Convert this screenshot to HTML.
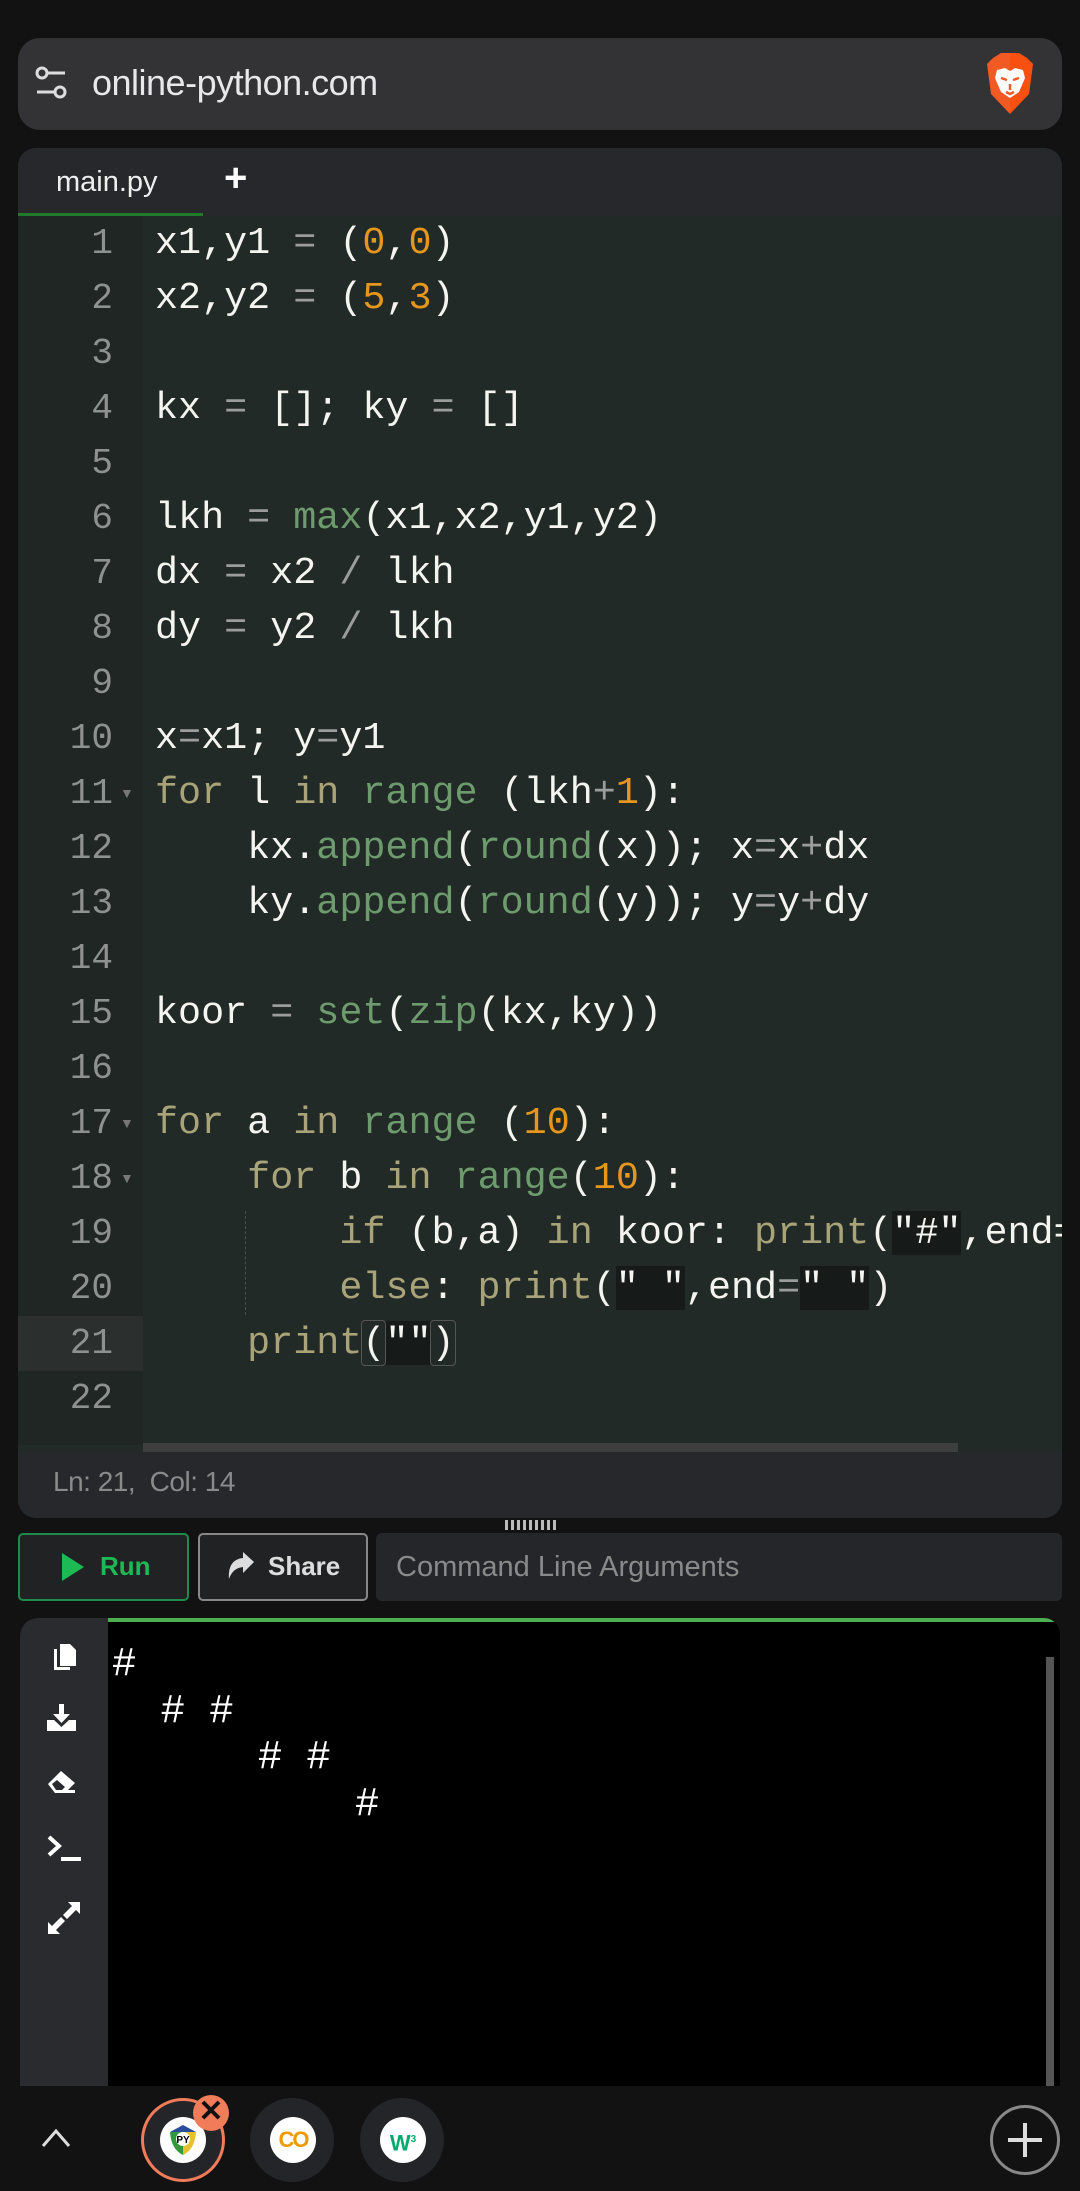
<!DOCTYPE html>
<html><head><meta charset="utf-8"><style>
*{margin:0;padding:0;box-sizing:border-box}
body{width:1080px;height:2191px;background:#121212;position:relative;overflow:hidden;font-family:"Liberation Sans",sans-serif}
.abs{position:absolute}
.url{left:18px;top:38px;width:1044px;height:92px;background:#333336;border-radius:22px}
.url .t{left:74px;top:24px;font-size:36px;color:#e8e8e8;letter-spacing:-0.5px}
.ed{left:18px;top:148px;width:1044px;height:1370px;background:#222a27;border-radius:18px;overflow:hidden}
.tabbar{left:0;top:0;width:1044px;height:68px;background:#27282b}
.code{font-family:"Liberation Mono","DejaVu Sans Mono",monospace;font-size:38.4px;line-height:55px;white-space:pre;color:#f4f4f0}
.gut{left:0;top:68px;width:125px;height:1229px;background:#1f2623}
.ln{left:0;width:95px;text-align:right;color:#8d918f;font-family:"Liberation Mono",monospace;font-size:36px;line-height:55px;white-space:pre}
.k{color:#a8a378}.b{color:#6e9b6e}.n{color:#e5961e}.o{color:#9a9d9b}
.s{background:#161b19}
.fold{position:absolute;left:102px;color:#777;font-size:14px;line-height:55px}
</style></head><body>
<div class="abs url">
 <svg class="abs" style="left:14px;top:26px" width="40" height="40" viewBox="0 0 40 40" fill="none" stroke="#ddd" stroke-width="3"><circle cx="10" cy="9" r="5"/><line x1="15" y1="9" x2="33" y2="9"/><circle cx="28" cy="28" r="5"/><line x1="5" y1="28" x2="23" y2="28"/></svg>
 <div class="abs t">online-python.com</div>
 <svg class="abs" style="left:967px;top:14px" width="50" height="64" viewBox="0 0 50 64"><path d="M8 6 L16 1 H34 L42 6 L48 12 L44 42 L25 62 L6 42 L2 12Z" fill="#f15a22"/><path d="M25 1 H34 L42 6 L48 12 L44 42 L25 62Z" fill="#ff4500" opacity=".5"/><path d="M12 18 L20 16 L25 19 L30 16 L38 18 L40 26 L34 40 L25 46 L16 40 L10 26Z" fill="#fff"/><path d="M16 26 L22 28 M34 26 L28 28 M25 32 V38 M21 40 L25 42 L29 40" stroke="#f15a22" stroke-width="2.5" fill="none"/></svg>
</div>
<div class="abs ed">
 <div class="abs tabbar"></div>
 <div class="abs" style="left:38px;top:18px;font-size:29px;color:#eee">main.py</div>
 <div class="abs" style="left:0;top:65px;width:185px;height:3px;background:#1f7a2a"></div>
 <div class="abs" style="left:206px;top:8px;font-size:40px;color:#fff;font-weight:bold">+</div>
 <div class="abs gut"></div>
 <div class="abs" style="left:0;top:1168px;width:125px;height:55px;background:#2b302e"></div>
 <div class="abs ln" style="top:68px">1
2
3
4
5
6
7
8
9
10
11
12
13
14
15
16
17
18
19
20
21
22</div>
 <div class="fold" style="top:618px">▼</div>
 <div class="fold" style="top:948px">▼</div>
 <div class="fold" style="top:1003px">▼</div>
 <div class="abs" style="left:227px;top:1063px;width:0;height:104px;border-left:1px dashed #4a4f4c"></div>
 <div class="abs code" style="left:137px;top:68px">x1,y1 <span class="o">=</span> (<span class="n">0</span>,<span class="n">0</span>)
x2,y2 <span class="o">=</span> (<span class="n">5</span>,<span class="n">3</span>)

kx <span class="o">=</span> []; ky <span class="o">=</span> []

lkh <span class="o">=</span> <span class="b">max</span>(x1,x2,y1,y2)
dx <span class="o">=</span> x2 <span class="o">/</span> lkh
dy <span class="o">=</span> y2 <span class="o">/</span> lkh

x<span class="o">=</span>x1; y<span class="o">=</span>y1
<span class="k">for</span> l <span class="k">in</span> <span class="b">range</span> (lkh<span class="o">+</span><span class="n">1</span>):
    kx.<span class="b">append</span>(<span class="b">round</span>(x)); x<span class="o">=</span>x<span class="o">+</span>dx
    ky.<span class="b">append</span>(<span class="b">round</span>(y)); y<span class="o">=</span>y<span class="o">+</span>dy

koor <span class="o">=</span> <span class="b">set</span>(<span class="b">zip</span>(kx,ky))

<span class="k">for</span> a <span class="k">in</span> <span class="b">range</span> (<span class="n">10</span>):
    <span class="k">for</span> b <span class="k">in</span> <span class="b">range</span>(<span class="n">10</span>):
        <span class="k">if</span> (b,a) <span class="k">in</span> koor: <span class="k">print</span>(<span class="s">"#"</span>,end=" ")
        <span class="k">else</span>: <span class="k">print</span>(<span class="s">" "</span>,end<span class="o">=</span><span class="s">" "</span>)
    <span class="k">print</span><span style="outline:1px solid #555;border-radius:3px">(</span><span class="s">""</span><span style="outline:1px solid #555;border-radius:3px">)</span>
</div>
 <div class="abs" style="left:125px;top:1295px;width:815px;height:9px;background:#3d3f3f"></div>
 <div class="abs" style="left:0;top:1305px;width:1044px;height:65px;background:#27282b"></div>
 <div class="abs" style="left:35px;top:1318px;font-size:28px;color:#8a8a8a;letter-spacing:-0.5px">Ln: 21,&nbsp; Col: 14</div>
</div>
<div class="abs" style="left:505px;top:1520px;width:52px;height:10px;background:repeating-linear-gradient(90deg,#bbb 0 3px,transparent 3px 6px)"></div>
<div class="abs" style="left:18px;top:1533px;width:171px;height:68px;border:2px solid #1f8a4c;border-radius:5px;background:#212224"></div>
<svg class="abs" style="left:60px;top:1551px" width="26" height="32"><path d="M2 2 L24 16 L2 30Z" fill="#1db954"/></svg>
<div class="abs" style="left:100px;top:1551px;font-size:26px;color:#1db954;font-weight:bold">Run</div>
<div class="abs" style="left:198px;top:1533px;width:170px;height:68px;border:2px solid #888;border-radius:5px;background:#212224"></div>
<svg class="abs" style="left:226px;top:1551px" width="30" height="30" viewBox="0 0 30 30"><path d="M28 11 L17 1 V7 C7 8 2 15 3 28 C6 20 10 17 17 16 V22Z" fill="#ddd"/></svg>
<div class="abs" style="left:268px;top:1551px;font-size:26px;color:#ddd;font-weight:bold">Share</div>
<div class="abs" style="left:376px;top:1533px;width:686px;height:68px;background:#252629;border-radius:6px"></div>
<div class="abs" style="left:396px;top:1551px;font-size:29px;color:#8a8a8a">Command Line Arguments</div>
<div class="abs" style="left:20px;top:1618px;width:1040px;height:468px;background:#000;border-radius:18px 16px 0 0;overflow:hidden">
 <div class="abs" style="left:0;top:0;width:88px;height:468px;background:#2a2b2e"></div>
 <div class="abs" style="left:88px;top:0;width:960px;height:4px;background:#4caf50"></div>
 <div class="abs" style="left:1026px;top:39px;width:8px;height:430px;background:#555"></div>
 <div class="abs" style="left:92px;top:24px;font-family:'Liberation Mono',monospace;font-size:40.5px;line-height:46.5px;color:#fff;white-space:pre">#
  # #
      # #
          #</div>
 <svg class="abs" style="left:30px;top:22px" width="30" height="32" viewBox="0 0 30 32" fill="#fff"><path d="M10 4 H20 L26 10 V26 H10Z"/><path d="M4 9 V30 H20 V27 H7 V9Z"/></svg>
 <svg class="abs" style="left:26px;top:85px" width="32" height="32" viewBox="0 0 32 32" fill="#fff"><rect x="13" y="1" width="5" height="12"/><path d="M7 11 H24 L15.5 20Z"/><path d="M1 17 H8 L15.5 24 L23 17 H30 V28 H1Z"/></svg>
 <svg class="abs" style="left:26px;top:148px" width="32" height="32" viewBox="0 0 32 32"><path d="M2 18 L15 5 L29 17 L19 27 H9Z" fill="#fff"/><path d="M6 18 L11 14 L19 21 L16 24 H10Z" fill="#2a2b2e"/><rect x="19" y="24" width="10" height="3" fill="#fff"/></svg>
 <svg class="abs" style="left:26px;top:216px" width="36" height="30" viewBox="0 0 36 30" fill="none" stroke="#fff" stroke-width="4"><path d="M3 3 L13 12 L3 21"/><path d="M15 25 H35"/></svg>
 <svg class="abs" style="left:26px;top:282px" width="36" height="36" viewBox="0 0 36 36" fill="#fff"><path d="M22 2 H34 V14 L30 10 L21 19 L17 15 L26 6Z"/><path d="M14 34 H2 V22 L6 26 L15 17 L19 21 L10 30Z"/></svg>
</div>
<svg class="abs" style="left:40px;top:2127px" width="32" height="22"><path d="M3 19 L16 4 L29 19" stroke="#ddd" stroke-width="3" fill="none"/></svg>
<div class="abs" style="left:141px;top:2098px;width:84px;height:84px;border-radius:50%;background:#242528;border:3px solid #f07c5a"></div>
<div class="abs" style="left:160px;top:2117px;width:46px;height:46px;border-radius:50%;background:#fff"></div>
<svg class="abs" style="left:168px;top:2124px" width="30" height="32" viewBox="0 0 30 32"><path d="M15 1 L28 8 H2Z" fill="#2a4d9b"/><path d="M2 8 H15 V31 C7 27 3 20 2 8Z" fill="#2f9a3d"/><path d="M15 8 H28 C27 20 23 27 15 31Z" fill="#e8c02e"/><circle cx="15" cy="15" r="7" fill="#fff"/><text x="15" y="19" font-size="10" font-weight="bold" text-anchor="middle" font-family="Liberation Sans">PY</text></svg>
<div class="abs" style="left:193px;top:2095px;width:36px;height:36px;border-radius:50%;background:#f07c5a;color:#111;font-size:30px;line-height:34px;text-align:center;font-weight:bold">✕</div>
<div class="abs" style="left:250px;top:2098px;width:84px;height:84px;border-radius:50%;background:#242528"></div>
<div class="abs" style="left:270px;top:2117px;width:46px;height:46px;border-radius:50%;background:#fff;color:#f29900;font-weight:bold;font-size:22px;line-height:46px;text-align:center;letter-spacing:-2px">CO</div>
<div class="abs" style="left:360px;top:2098px;width:84px;height:84px;border-radius:50%;background:#242528"></div>
<div class="abs" style="left:380px;top:2117px;width:46px;height:46px;border-radius:50%;background:#fff;color:#04aa6d;font-weight:bold;font-size:22px;line-height:46px;text-align:center">W<sup style="font-size:10px">3</sup></div>
<div class="abs" style="left:990px;top:2105px;width:70px;height:70px;border-radius:50%;border:3px solid #888"></div>
<div class="abs" style="left:1008px;top:2138px;width:34px;height:4px;background:#ddd"></div>
<div class="abs" style="left:1023px;top:2123px;width:4px;height:34px;background:#ddd"></div>
</body></html>
